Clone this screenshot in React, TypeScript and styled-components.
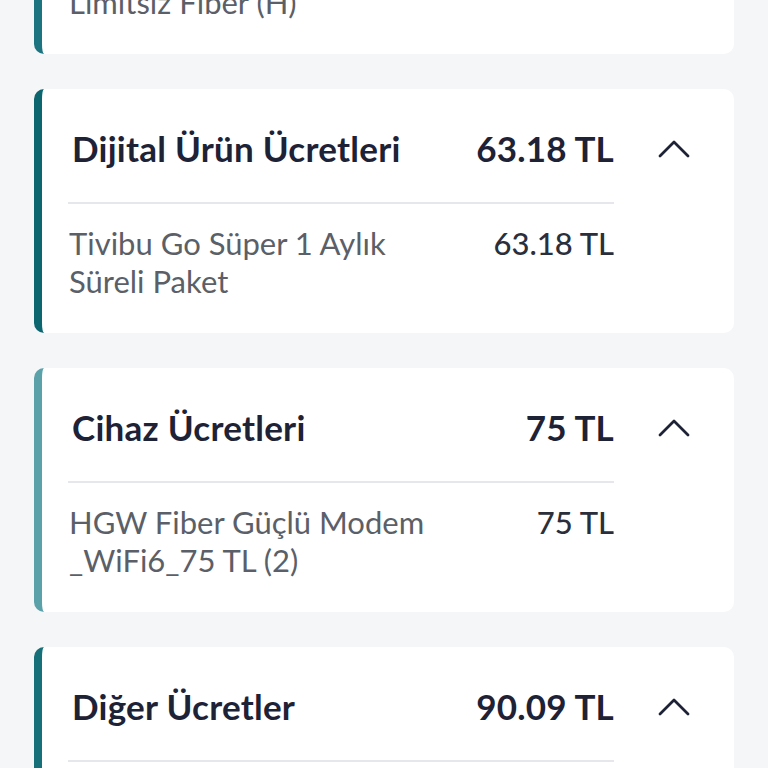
import React from "react";
import styled, { createGlobalStyle } from "styled-components";

const Global = createGlobalStyle`
  html, body { margin: 0; padding: 0; background: #f5f6f8; }
  body { font-family: Lato, "Noto Sans", sans-serif; overflow: hidden; }
`;

const Page = styled.div`
  display: flex;
  flex-direction: column;
  gap: 35px;
  padding: 0 34px;
  margin-top: -190px;
`;

const Card = styled.section<{ $accent: string }>`
  background: #ffffff;
  border-left: 8px solid ${(p) => p.$accent};
  border-radius: 10px;
  padding: 35px 0 33px 26px;
  display: flex;
  flex-direction: column;
`;

const Header = styled.div`
  display: flex;
  align-items: center;
  height: 48px;
`;

const Title = styled.h2`
  flex: 1;
  margin: 0;
  font-size: 35px;
  font-weight: 700;
  letter-spacing: 0.25px;
  color: #1e2236;
  line-height: 48px;
  padding-left: 4px;
  white-space: nowrap;
`;

const Total = styled.span`
  font-size: 35px;
  font-weight: 700;
  letter-spacing: 0.2px;
  color: #1e2236;
  white-space: nowrap;
`;

const ChevronBox = styled.span`
  width: 120px;
  flex: none;
  display: flex;
  justify-content: center;
  align-items: center;
  padding-top: 1px;
`;

const Divider = styled.hr`
  border: none;
  height: 2px;
  background: #e6e7eb;
  margin: 30px 120px 20px 0;
`;

const Item = styled.div`
  display: flex;
  align-items: flex-start;
  gap: 24px;
  margin-right: 120px;
`;

const ItemName = styled.span`
  flex: 1;
  font-size: 31px;
  line-height: 38px;
  color: #5b5f68;
  white-space: pre-line;
  padding-left: 1px;
`;

const ItemPrice = styled.span`
  font-size: 31px;
  line-height: 38px;
  font-weight: 500;
  color: #2b2f3c;
  white-space: nowrap;
`;

const Chevron = () => (
  <svg width="34" height="20" viewBox="0 0 34 20" fill="none">
    <path
      d="M3 17 L17 3 L31 17"
      stroke="#1e2236"
      strokeWidth="2.8"
      strokeLinecap="round"
      strokeLinejoin="round"
    />
  </svg>
);

type Group = {
  accent: string;
  title: string;
  total: string;
  item: string;
  price: string;
};

const groups: Group[] = [
  {
    accent: "#1b7480",
    title: "İnternet Ücretleri",
    total: "150.00 TL",
    item: "Süper Hızlı İnternet\nLimitsiz Fiber (H)",
    price: "150.00 TL",
  },
  {
    accent: "#0c6670",
    title: "Dijital Ürün Ücretleri",
    total: "63.18 TL",
    item: "Tivibu Go Süper 1 Aylık\nSüreli Paket",
    price: "63.18 TL",
  },
  {
    accent: "#5aa1aa",
    title: "Cihaz Ücretleri",
    total: "75 TL",
    item: "HGW Fiber Güçlü Modem\n_WiFi6_75 TL (2)",
    price: "75 TL",
  },
  {
    accent: "#16707a",
    title: "Diğer Ücretler",
    total: "90.09 TL",
    item: "Hizmet Bedeli\nAylık Ücret",
    price: "90.09 TL",
  },
];

export default function App() {
  return (
    <>
      <Global />
      <Page>
        {groups.map((g) => (
          <Card key={g.title} $accent={g.accent}>
            <Header>
              <Title>{g.title}</Title>
              <Total>{g.total}</Total>
              <ChevronBox>
                <Chevron />
              </ChevronBox>
            </Header>
            <Divider />
            <Item>
              <ItemName>{g.item}</ItemName>
              <ItemPrice>{g.price}</ItemPrice>
            </Item>
          </Card>
        ))}
      </Page>
    </>
  );
}
